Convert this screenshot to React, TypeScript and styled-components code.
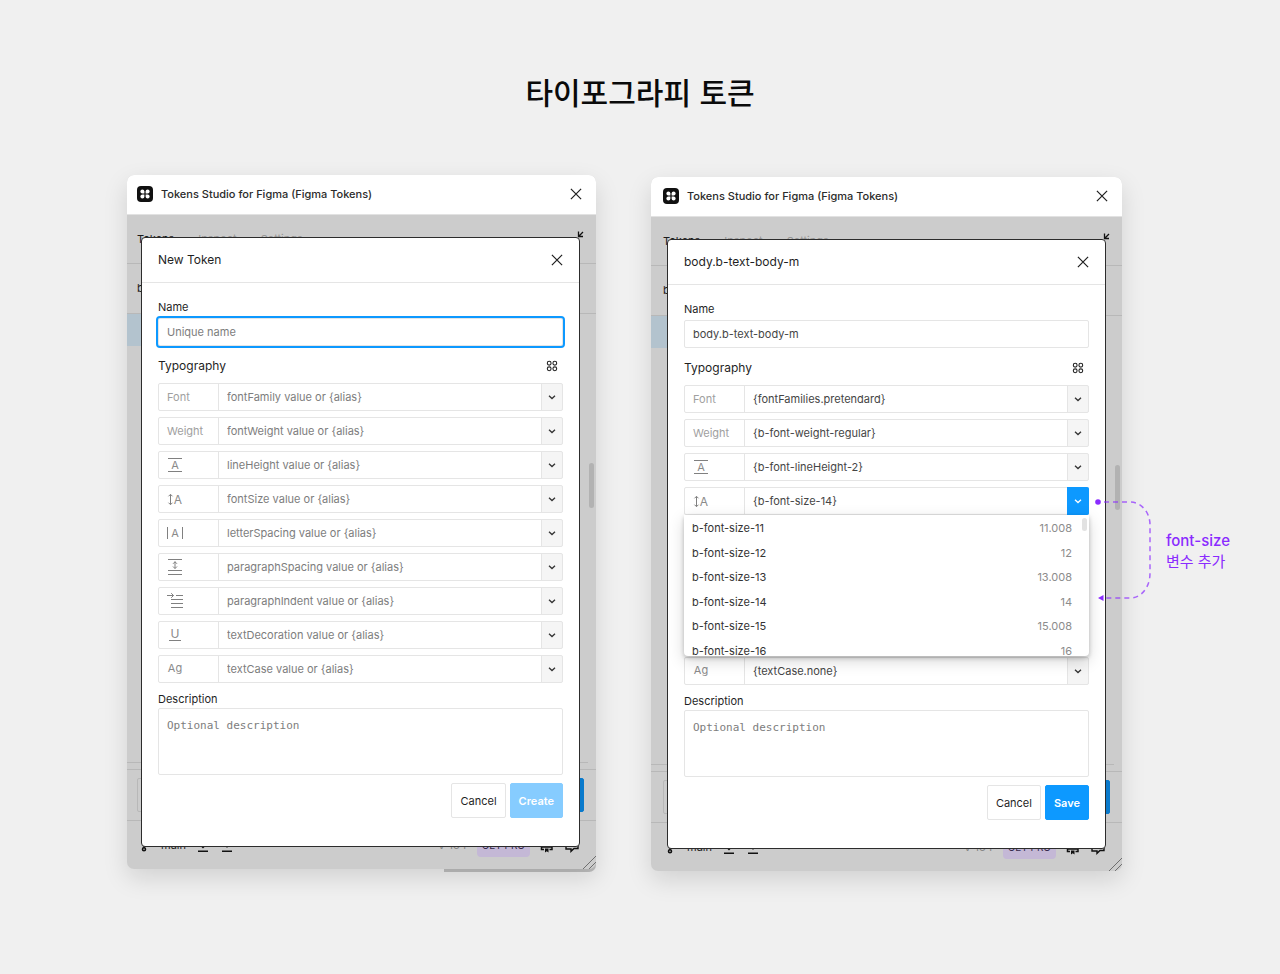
import React, { useId } from 'react';
import styled, { createGlobalStyle, css } from 'styled-components';

const color = {
  page: '#f0f0f0',
  dim: '#cccccc',
  dimLine: '#b8b8b8',
  line: '#e5e5e5',
  text: '#1f1f1f',
  value: '#454545',
  muted: '#7d7d7d',
  label: '#a0a0a0',
  blue: '#0d99ff',
  blueSoft: '#86ccff',
  blueDim: '#0a7acc',
  purple: '#8a2bff',
};

const GlobalStyle = createGlobalStyle`
  *, *::before, *::after { box-sizing: border-box; }
  body {
    margin: 0;
    background: ${color.page};
    font-family: Inter, "Noto Sans CJK KR", sans-serif;
    font-size: 11px;
    line-height: 16px;
    color: ${color.text};
  }
  button, input, textarea { font: inherit; color: inherit; margin: 0; }
  svg { display: block; flex: none; }
`;

/* ---------- page ---------- */

const Page = styled.main`
  min-height: 100vh;
  padding: 69px 158px 100px 127px;
`;

const PageTitle = styled.h1`
  margin: 0 -158px 62px -127px;
  text-align: center;
  font-family: "Noto Sans CJK KR", sans-serif;
  font-size: 30px;
  line-height: 44px;
  font-weight: 500;
  color: #0a0a0a;
`;

const Windows = styled.div`
  display: grid;
  grid-template-columns: minmax(0, 469fr) minmax(0, 471fr);
  gap: 55px;
  align-items: start;
`;

const WindowSlot = styled.div<{ $drop?: number }>`
  position: relative;
  padding-top: ${(p) => p.$drop ?? 0}px;
`;

/* ---------- plugin window ---------- */

const WindowFrame = styled.section<{ $ledge?: boolean }>`
  position: relative;
  border-radius: 7px;
  background: ${color.dim};
  box-shadow: 0 9px 24px rgba(0, 0, 0, 0.13);
  ${(p) =>
    p.$ledge &&
    css`
      &::before {
        content: '';
        position: absolute;
        z-index: -1;
        right: 0;
        bottom: -3px;
        width: 152px;
        height: 20px;
        background: #bebebe;
        border-radius: 0 0 7px 0;
      }
    `}
`;

const WindowBar = styled.header<{ $edge: number }>`
  display: flex;
  align-items: center;
  gap: 8px;
  height: 40px;
  padding: 0 12px 2px ${(p) => p.$edge}px;
  border-bottom: 1px solid #e2e2e2;
  border-radius: 7px 7px 0 0;
  background: #fff;
`;

const WindowTitle = styled.h2`
  flex: 1;
  margin: 0;
  font-size: 11px;
  font-weight: 500;
  color: #2b2b2b;
`;

const IconButton = styled.button`
  display: flex;
  align-items: center;
  justify-content: center;
  padding: 0;
  border: 0;
  background: none;
  color: ${color.text};
`;

const WindowBody = styled.div`
  display: grid;
  grid-template: minmax(0, 1fr) / minmax(0, 1fr);
  isolation: isolate;
`;

/* ---------- dimmed plugin behind the dialog ---------- */

const Backdrop = styled.div`
  grid-area: 1 / 1;
  display: flex;
  flex-direction: column;
  overflow: hidden;
  border-radius: 0 0 7px 7px;
`;

const TabBar = styled.nav<{ $edge: number }>`
  display: flex;
  align-items: center;
  gap: 24px;
  height: 49px;
  padding: 0 12px 0 ${(p) => p.$edge}px;
  border-bottom: 1px solid ${color.dimLine};
`;

const Tab = styled.a<{ $active?: boolean }>`
  color: ${(p) => (p.$active ? '#1c1c1c' : '#959595')};
  text-decoration: none;
`;

const ShrinkButton = styled(IconButton)`
  margin-left: auto;
`;

const SetRow = styled.div<{ $edge: number }>`
  display: flex;
  align-items: center;
  height: 50px;
  padding: 0 0 2px ${(p) => p.$edge}px;
  border-bottom: 1px solid ${color.dimLine};
`;

const SelectedRow = styled.div`
  height: 32px;
  margin-right: 60%;
  background: #b3c3ce;
`;

const TokenArea = styled.div`
  flex: 1;
  display: flex;
  flex-direction: column;
  align-items: flex-end;
  justify-content: space-between;
  padding: 117px 2px 6px 0;
`;

const Thumb = styled.div`
  width: 5px;
  height: 45px;
  border-radius: 3px;
  background: #b2b2b2;
`;

const ListEdge = styled.div`
  align-self: stretch;
  height: 1px;
  margin-right: 6px;
  background: ${color.dimLine};
`;

const ActionStrip = styled.div<{ $edge: number }>`
  display: flex;
  justify-content: space-between;
  padding: 8px 12px 8px ${(p) => p.$edge}px;
  border-top: 1px solid ${color.dimLine};
`;

const DimBlock = styled.div<{ $primary?: boolean }>`
  width: 80px;
  height: 34px;
  border-radius: 2px;
  border: 1px solid ${(p) => (p.$primary ? color.blueDim : color.dimLine)};
  background: ${(p) => (p.$primary ? color.blueDim : 'transparent')};
`;

const StatusBar = styled.footer<{ $edge: number }>`
  position: relative;
  display: flex;
  align-items: center;
  gap: 10px;
  height: 49px;
  padding: 0 16px 0 ${(p) => p.$edge}px;
  border-top: 1px solid ${color.dimLine};
`;

const Version = styled.span`
  margin-left: auto;
  color: #858585;
`;

const ProBadge = styled.span`
  padding: 4px 5px;
  border-radius: 4px;
  background: #c4b8d6;
  color: #33274a;
  font-size: 10px;
`;

const Grip = styled.svg`
  position: absolute;
  right: 0;
  bottom: 0;
`;

/* ---------- dialog ---------- */

const Dialog = styled.form`
  grid-area: 1 / 1;
  z-index: 1;
  margin: 22px 16px 22px auto;
  width: calc(100% - 30px);
  max-width: 439px;
  border: 1px solid #2c2c2c;
  border-radius: 4px;
  background: #fff;
`;

const DialogHeader = styled.header`
  display: flex;
  align-items: center;
  justify-content: space-between;
  height: 45px;
  padding: 0 14px 0 16px;
  border-bottom: 1px solid ${color.line};
`;

const DialogTitle = styled.h3`
  margin: 0;
  font-size: 12px;
  font-weight: 400;
`;

const DialogBody = styled.div`
  display: flex;
  flex-direction: column;
  padding: 15px 16px 28px;
`;

const FieldLabel = styled.label`
  line-height: 18px;
`;

const NameInput = styled.input<{ $focused?: boolean }>`
  width: 100%;
  height: 28px;
  margin-top: 2px;
  padding: 0 8px;
  border: 1px solid ${color.line};
  border-radius: 2px;
  outline: ${(p) => (p.$focused ? `2px solid ${color.blue}` : 'none')};
  background: #fff;
  color: ${color.value};
  &::placeholder { color: ${color.muted}; opacity: 1; }
`;

const SectionHeader = styled.div`
  display: flex;
  align-items: center;
  justify-content: space-between;
  height: 37px;
  padding: 2px 4px 0 0;
`;

const SectionTitle = styled.h4`
  margin: 0;
  font-size: 12px;
  font-weight: 400;
`;

const Rows = styled.div`
  display: flex;
  flex-direction: column;
  gap: 6px;
`;

const Row = styled.div<{ $covered?: boolean }>`
  position: relative;
  display: flex;
  height: 28px;
  border: 1px solid ${color.line};
  border-radius: 2px;
  visibility: ${(p) => (p.$covered ? 'hidden' : 'visible')};
`;

const RowLabel = styled.label`
  display: flex;
  align-items: center;
  width: 60px;
  padding-left: 8px;
  border-right: 1px solid ${color.line};
  color: ${color.label};
`;

const RowInput = styled.input`
  flex: 1;
  min-width: 0;
  padding: 0 8px;
  border: 0;
  outline: none;
  background: none;
  color: ${color.value};
  &::placeholder { color: ${color.muted}; opacity: 1; }
`;

const RowToggle = styled.button<{ $open?: boolean }>`
  display: flex;
  align-items: center;
  justify-content: center;
  width: 22px;
  margin: ${(p) => (p.$open ? '-1px' : '0 -1px 0 0')};
  padding: 0;
  border: 0;
  border-left: 1px solid ${(p) => (p.$open ? color.blue : color.line)};
  border-right: 1px solid ${(p) => (p.$open ? color.blue : color.line)};
  border-radius: 0 2px 2px 0;
  background: ${(p) => (p.$open ? color.blue : '#f5f5f5')};
  color: ${(p) => (p.$open ? '#fff' : '#333')};
`;

const Menu = styled.div`
  position: absolute;
  z-index: 2;
  top: 100%;
  left: -1px;
  right: -1px;
  height: 141px;
  margin-top: 1px;
  overflow: hidden;
  border-radius: 0 0 4px 4px;
  background: #fff;
  box-shadow: 0 2px 4px rgba(0, 0, 0, 0.22), 0 5px 16px rgba(0, 0, 0, 0.16);
`;

const Options = styled.ul`
  display: grid;
  grid-auto-rows: 1fr;
  height: 147px;
  margin: 1px 0 0;
  padding: 0;
  list-style: none;
`;

const Option = styled.li`
  display: flex;
  align-items: center;
  justify-content: space-between;
  padding: 0 17px 0 8px;
  color: #333;
`;

const OptionValue = styled.span`
  color: #8c8c8c;
`;

const MenuThumb = styled.div`
  position: absolute;
  top: 3px;
  right: 2px;
  width: 5px;
  height: 13px;
  border-radius: 3px;
  background: #e2e2e2;
`;

const DescriptionLabel = styled(FieldLabel)`
  margin-top: 7px;
`;

const Description = styled.textarea`
  width: 100%;
  height: 67px;
  padding: 9px 8px;
  border: 1px solid ${color.line};
  border-radius: 2px;
  outline: none;
  resize: none;
  font-family: "DejaVu Sans Mono", monospace;
  &::placeholder { color: ${color.muted}; opacity: 1; }
`;

const Actions = styled.div`
  display: flex;
  justify-content: flex-end;
  gap: 4px;
  margin-top: 8px;
`;

const Button = styled.button<{ $tone?: 'primary' | 'soft' }>`
  height: 35px;
  padding: 0 8px;
  border: 1px solid ${color.line};
  border-radius: 2px;
  background: #fff;
  ${(p) =>
    p.$tone &&
    css`
      border-color: ${p.$tone === 'soft' ? color.blueSoft : color.blue};
      background: ${p.$tone === 'soft' ? color.blueSoft : color.blue};
      color: #fff;
      font-weight: 600;
    `}
`;

/* ---------- annotation ---------- */

const Callout = styled.aside`
  position: absolute;
  z-index: 3;
  left: calc(100% - 28px);
  top: 323px;
  display: flex;
  align-items: center;
  gap: 14px;
`;

const CalloutText = styled.p`
  margin: 0;
  font-size: 15px;
  line-height: 21px;
  font-weight: 500;
  white-space: nowrap;
  color: ${color.purple};
`;

const CalloutNote = styled.span`
  display: block;
  font-weight: 400;
`;

/* ---------- icons ---------- */

const Logo = () => (
  <svg width="16" height="16" viewBox="0 0 16 16" aria-hidden="true">
    <rect width="16" height="16" rx="4" fill="#111" />
    <g fill="#fff">
      <path d="M5.4 3.4a2 2 0 0 1 2 2v2h-2a2 2 0 0 1 0-4Z" />
      <path d="M10.6 3.4a2 2 0 0 1 0 4h-2v-2a2 2 0 0 1 2-2Z" />
      <path d="M5.4 8.6h2v2a2 2 0 1 1-2-2Z" />
      <path d="M8.6 8.6h2a2 2 0 1 1-2 2Z" />
    </g>
  </svg>
);

const CloseIcon = () => (
  <svg width="16" height="16" viewBox="0 0 16 16" fill="none" stroke="currentColor" strokeWidth="1.2" aria-hidden="true">
    <path d="M2.9 2.9 13.1 13.1M13.1 2.9 2.9 13.1" />
  </svg>
);

const ChevronIcon = () => (
  <svg width="10" height="10" viewBox="0 0 10 10" fill="none" stroke="currentColor" strokeWidth="1.3" aria-hidden="true">
    <path d="M2 3.7 5 6.5 8 3.7" />
  </svg>
);

const FourDotsIcon = () => (
  <svg width="14" height="14" viewBox="0 0 14 14" fill="none" stroke="#222" strokeWidth="1.1" aria-hidden="true">
    <circle cx="4.200" cy="4.200" r="1.900" />
    <circle cx="9.800" cy="4.200" r="1.900" />
    <circle cx="4.200" cy="9.800" r="1.900" />
    <circle cx="9.800" cy="9.800" r="1.900" />
  </svg>
);

const ShrinkIcon = () => (
  <svg width="15" height="18" viewBox="0 0 15 18" fill="none" stroke="#111" strokeWidth="1.3" aria-hidden="true">
    <path d="M9.500 1.500v5H14M9.500 6.500l4.500-4.500M5.500 15.500v-5H1M5.500 10.500 1 15" />
  </svg>
);

const BranchIcon = () => (
  <svg width="14" height="16" viewBox="0 0 14 16" fill="none" stroke="#111" strokeWidth="1.6" aria-hidden="true">
    <circle cx="7" cy="12.300" r="1.500" />
    <path d="M7 4v7" />
    <circle cx="7" cy="3" r="1.500" />
  </svg>
);

const TransferIcon = ({ up }: { up?: boolean }) => (
  <svg width="14" height="16" viewBox="0 0 14 16" fill="none" stroke="#111" strokeWidth="1.4" aria-hidden="true">
    <path d={up ? 'M7 10.500V2M4 5l3-3 3 3' : 'M7 2v8.500M4 7.500l3 3 3-3'} />
    <path d="M2 14.300h10" />
  </svg>
);

const BookIcon = () => (
  <svg width="14" height="16" viewBox="0 0 14 16" fill="none" stroke="#111" strokeWidth="1.5" aria-hidden="true">
    <path d="M4 12.500H1.500V3h10.500v9.500H9.500M1.500 10h10.500" />
    <path d="M5 11.500h3.500V15.500L6.700 14.300 5 15.500Z" fill="#111" stroke="none" />
  </svg>
);

const ChatIcon = () => (
  <svg width="16" height="16" viewBox="0 0 16 16" fill="none" stroke="#111" strokeWidth="1.4" aria-hidden="true">
    <path d="M2 3h12v8.500H10L7 14.300v-2.300H2Z" />
  </svg>
);

const GlyphSvg = ({ children }: { children: React.ReactNode }) => (
  <svg
    width="18"
    height="18"
    viewBox="0 0 18 18"
    fill="none"
    stroke="#808080"
    strokeWidth="1"
    fontFamily="Inter, sans-serif"
    aria-hidden="true"
  >
    {children}
  </svg>
);

const Glyph = ({ x, y, size, children }: { x: number; y: number; size: number; children: string }) => (
  <text x={x} y={y} fontSize={size} textAnchor="middle" fill="#8a8a8a" stroke="none">
    {children}
  </text>
);

const LineHeightIcon = () => (
  <GlyphSvg>
    <path d="M1 2.500h14M1 15.500h14" />
    <Glyph x={8} y={13} size={11}>A</Glyph>
  </GlyphSvg>
);

const FontSizeIcon = () => (
  <GlyphSvg>
    <path d="M3.500 4.500v10M1.500 6.300l2-2 2 2M1.500 12.700l2 2 2-2" />
    <Glyph x={11} y={14} size={12}>A</Glyph>
  </GlyphSvg>
);

const LetterSpacingIcon = () => (
  <GlyphSvg>
    <path d="M.5 3v12M15.500 3v12" />
    <Glyph x={8} y={13} size={11}>A</Glyph>
  </GlyphSvg>
);

const ParagraphSpacingIcon = () => (
  <GlyphSvg>
    <path d="M1 1.500h14M1 12.500h14M1 16.500h14" />
    <path d="M8 3.500v7M6 5.800l2-2 2 2M6 8.500l2 2 2-2" />
  </GlyphSvg>
);

const ParagraphIndentIcon = () => (
  <GlyphSvg>
    <path d="M0 3.500h6.500M4.200 1.200l2.300 2.300-2.300 2.300M9 3.500h7M4 7.500h12M4 11.500h12M4 15.500h12" />
  </GlyphSvg>
);

const DecorationIcon = () => (
  <GlyphSvg>
    <Glyph x={8} y={12} size={12}>U</Glyph>
    <path d="M2 14.500h12" />
  </GlyphSvg>
);

const CaseIcon = () => (
  <GlyphSvg>
    <Glyph x={8} y={12} size={11}>Ag</Glyph>
  </GlyphSvg>
);

/* ---------- data ---------- */

const properties: { key: string; label: React.ReactNode }[] = [
  { key: 'fontFamily', label: 'Font' },
  { key: 'fontWeight', label: 'Weight' },
  { key: 'lineHeight', label: <LineHeightIcon /> },
  { key: 'fontSize', label: <FontSizeIcon /> },
  { key: 'letterSpacing', label: <LetterSpacingIcon /> },
  { key: 'paragraphSpacing', label: <ParagraphSpacingIcon /> },
  { key: 'paragraphIndent', label: <ParagraphIndentIcon /> },
  { key: 'textDecoration', label: <DecorationIcon /> },
  { key: 'textCase', label: <CaseIcon /> },
];

/* The open menu is as tall as four rows; those are hidden while it is open. */
const MENU_SPAN = 4;

const bodyValues: Record<string, string> = {
  fontFamily: '{fontFamilies.pretendard}',
  fontWeight: '{b-font-weight-regular}',
  lineHeight: '{b-font-lineHeight-2}',
  fontSize: '{b-font-size-14}',
  textCase: '{textCase.none}',
};

const fontSizes = [
  ['b-font-size-11', '11.008'],
  ['b-font-size-12', '12'],
  ['b-font-size-13', '13.008'],
  ['b-font-size-14', '14'],
  ['b-font-size-15', '15.008'],
  ['b-font-size-16', '16'],
];

/* ---------- composition ---------- */

const SizeMenu = () => (
  <Menu>
    <Options role="listbox" aria-label="fontSize variables">
      {fontSizes.map(([name, value]) => (
        <Option key={name} role="option" aria-selected={value === '14'}>
          <span>{name}</span>
          <OptionValue>{value}</OptionValue>
        </Option>
      ))}
    </Options>
    <MenuThumb />
  </Menu>
);

interface TokenDialogProps {
  title: string;
  name?: string;
  values?: Record<string, string>;
  openKey?: string;
  submit: string;
}

const TokenDialog = ({ title, name, values, openKey, submit }: TokenDialogProps) => {
  const id = useId();
  const openIndex = properties.findIndex((p) => p.key === openKey);
  return (
    <Dialog role="dialog" aria-label={title} onSubmit={(e) => e.preventDefault()}>
      <DialogHeader>
        <DialogTitle>{title}</DialogTitle>
        <IconButton type="button" aria-label="Close dialog">
          <CloseIcon />
        </IconButton>
      </DialogHeader>
      <DialogBody>
        <FieldLabel htmlFor={`${id}-name`}>Name</FieldLabel>
        <NameInput id={`${id}-name`} $focused={!name} placeholder="Unique name" defaultValue={name} />
        <SectionHeader>
          <SectionTitle>Typography</SectionTitle>
          <IconButton type="button" aria-label="Toggle alias mode">
            <FourDotsIcon />
          </IconButton>
        </SectionHeader>
        <Rows>
          {properties.map(({ key, label }, index) => (
            <Row key={key} $covered={openIndex >= 0 && index > openIndex && index <= openIndex + MENU_SPAN}>
              <RowLabel htmlFor={`${id}-${key}`}>{label}</RowLabel>
              <RowInput
                id={`${id}-${key}`}
                aria-label={key}
                placeholder={values ? undefined : `${key} value or {alias}`}
                defaultValue={values?.[key]}
              />
              <RowToggle type="button" aria-label={`Choose ${key}`} $open={openKey === key}>
                <ChevronIcon />
              </RowToggle>
              {openKey === key && <SizeMenu />}
            </Row>
          ))}
        </Rows>
        <DescriptionLabel htmlFor={`${id}-description`}>Description</DescriptionLabel>
        <Description id={`${id}-description`} placeholder="Optional description" />
        <Actions>
          <Button type="button">Cancel</Button>
          <Button type="submit" $tone={name ? 'primary' : 'soft'}>
            {submit}
          </Button>
        </Actions>
      </DialogBody>
    </Dialog>
  );
};

const PluginWindow = ({ edge, ledge, children }: { edge: number; ledge?: boolean; children: React.ReactNode }) => (
  <WindowFrame $ledge={ledge}>
    <WindowBar $edge={edge}>
      <Logo />
      <WindowTitle>Tokens Studio for Figma (Figma Tokens)</WindowTitle>
      <IconButton type="button" aria-label="Close plugin">
        <CloseIcon />
      </IconButton>
    </WindowBar>
    <WindowBody>
      <Backdrop>
        <TabBar $edge={edge}>
          <Tab href="#tokens" $active>Tokens</Tab>
          <Tab href="#inspect">Inspect</Tab>
          <Tab href="#settings">Settings</Tab>
          <ShrinkButton type="button" aria-label="Minimize">
            <ShrinkIcon />
          </ShrinkButton>
        </TabBar>
        <SetRow $edge={edge}>body</SetRow>
        <SelectedRow />
        <TokenArea>
          <Thumb />
          <ListEdge />
        </TokenArea>
        <ActionStrip $edge={edge}>
          <DimBlock />
          <DimBlock $primary />
        </ActionStrip>
        <StatusBar $edge={edge}>
          <BranchIcon />
          <span>main</span>
          <TransferIcon />
          <TransferIcon up />
          <Version>V 134</Version>
          <ProBadge>GET PRO</ProBadge>
          <BookIcon />
          <ChatIcon />
          <Grip width="13" height="13" viewBox="0 0 13 13" fill="none" stroke="#6e6e6e" aria-hidden="true">
            <path d="M0 13 13 0M6 13l7-7" />
          </Grip>
        </StatusBar>
      </Backdrop>
      {children}
    </WindowBody>
  </WindowFrame>
);

const FontSizeCallout = () => (
  <Callout>
    <svg width="58" height="106" viewBox="0 0 58 106" fill="none" aria-hidden="true">
      <path
        d="M10 4H36C47 4 56 14 56 27V75C56 90 47 100 36 100H10"
        stroke={color.purple}
        strokeOpacity="0.7"
        strokeWidth="1.500"
        strokeDasharray="5 4"
      />
      <circle cx="4" cy="4" r="2.800" fill={color.purple} />
      <path d="M4 100l5.500-3v6Z" fill={color.purple} />
    </svg>
    <CalloutText lang="ko">
      font-size
      <CalloutNote>변수 추가</CalloutNote>
    </CalloutText>
  </Callout>
);

export default function App() {
  return (
    <>
      <GlobalStyle />
      <Page>
        <PageTitle lang="ko">타이포그라피 토큰</PageTitle>
        <Windows>
          <WindowSlot>
            <PluginWindow edge={10} ledge>
              <TokenDialog title="New Token" submit="Create" />
            </PluginWindow>
          </WindowSlot>
          <WindowSlot $drop={2}>
            <PluginWindow edge={12}>
              <TokenDialog
                title="body.b-text-body-m"
                name="body.b-text-body-m"
                values={bodyValues}
                openKey="fontSize"
                submit="Save"
              />
            </PluginWindow>
            <FontSizeCallout />
          </WindowSlot>
        </Windows>
      </Page>
    </>
  );
}
